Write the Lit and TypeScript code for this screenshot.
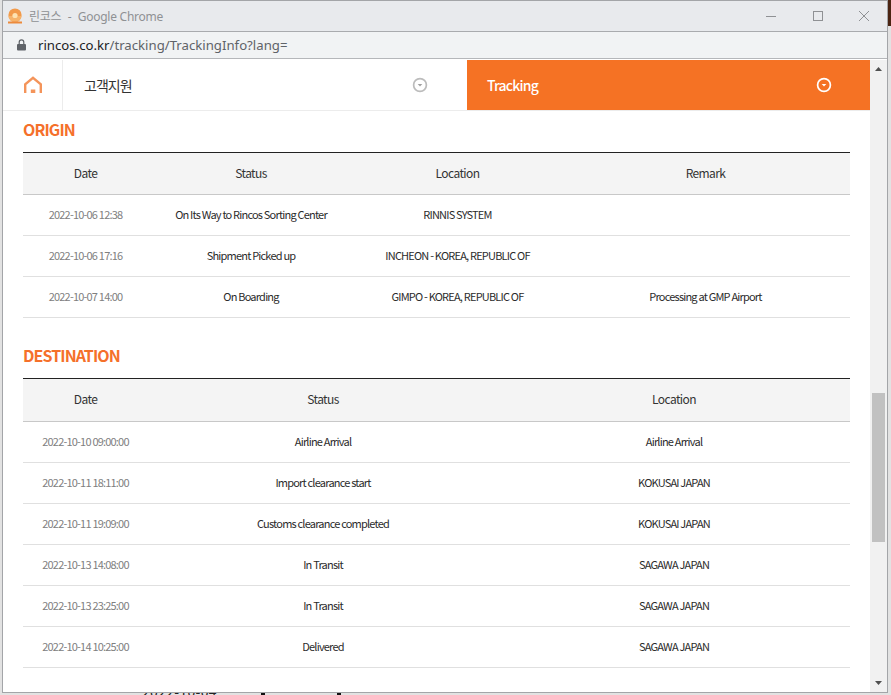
import { LitElement, html, css } from "lit";
import { customElement } from "lit/decorators.js";

const origin = [
  ["2022-10-06 12:38", "On Its Way to Rincos Sorting Center", "RINNIS SYSTEM", ""],
  ["2022-10-06 17:16", "Shipment Picked up", "INCHEON - KOREA, REPUBLIC OF", ""],
  ["2022-10-07 14:00", "On Boarding", "GIMPO - KOREA, REPUBLIC OF", "Processing at GMP Airport"],
];
const dest = [
  ["2022-10-10 09:00:00", "Airline Arrival", "Airline Arrival"],
  ["2022-10-11 18:11:00", "Import clearance start", "KOKUSAI JAPAN"],
  ["2022-10-11 19:09:00", "Customs clearance completed", "KOKUSAI JAPAN"],
  ["2022-10-13 14:08:00", "In Transit", "SAGAWA JAPAN"],
  ["2022-10-13 23:25:00", "In Transit", "SAGAWA JAPAN"],
  ["2022-10-14 10:25:00", "Delivered", "SAGAWA JAPAN"],
];

@customElement("app-root")
export class AppRoot extends LitElement {
  static styles = css`
    :host { display: block; position: relative; width: 891px; height: 695px; background: #e2e2e2; overflow: hidden; padding-left: 2px; box-sizing: border-box;
      font-family: "Noto Sans CJK KR", "Noto Sans", sans-serif; }
    .window { position: relative; z-index: 1; width: 886px; height: 693px; box-sizing: border-box; display: flex; flex-direction: column;
      background: #fff; border: 1px solid #a3a5a8; }
    .title { height: 30px; flex: none; background: #e8eaed; display: flex; align-items: center; padding-left: 4px; gap: 6px; color: #8f9194; font-size: 12px; }
    .title-text { flex: 1; letter-spacing: -0.25px; font-family: "Noto Sans", "Noto Sans CJK KR", sans-serif; }
    .ko { word-spacing: 3.5px; }
    .controls { display: flex; }
    .controls svg { display: block; width: 46px; height: 30px; }
    .url { height: 28px; flex: none; box-sizing: border-box; background: #f1f3f4; border-top: 1px solid #a9abae; border-bottom: 1px solid #b5b7ba; display: flex; align-items: center; padding-left: 14px; gap: 12px; font-size: 13.2px; color: #5f6368; font-family: "Noto Sans", sans-serif; }
    .url b { font-weight: 400; color: #202124; }
    .page { flex: 1; min-height: 0; display: flex; margin-top: 1px; }
    .content { flex: 1; min-width: 0; overflow: hidden; }
    .nav { display: flex; border-bottom: 1px solid #ececec; height: 50px; }
    .home { width: 59px; border-right: 1px solid #ececec; display: flex; align-items: center; justify-content: center; }
    .menu { width: 404px; display: flex; align-items: center; justify-content: space-between; padding: 0 39px 0 21px; box-sizing: border-box; font-size: 14px; color: #333; letter-spacing: -1px; }
    .track { flex: 1; background: #f57224; color: #fff; display: flex; align-items: center; justify-content: space-between; padding: 0 38px 0 20px; font-size: 14px; font-weight: 500; letter-spacing: -0.8px; }
    .body { padding: 0 20px; }
    h2 { margin: 0; font-size: 16px; line-height: 24px; font-weight: 700; color: #f5702a; letter-spacing: -0.9px; }
    .h1 { padding-top: 6px; padding-bottom: 11px; }
    .h2 { padding-top: 25px; padding-bottom: 11px; }
    .tbl { border-top: 1px solid #222; }
    .row { display: grid; height: 38px; padding-bottom: 2px; align-items: center; text-align: center; border-bottom: 1px solid #e0e0e0; font-size: 11px; letter-spacing: -0.8px; color: #2b2b2b; line-height: 16px; }
    .o { grid-template-columns: 125px 206px 207px 289px; }
    .d { grid-template-columns: 125px 350px 352px; }
    .head { background: #f4f4f4; font-size: 12px; letter-spacing: -0.6px; height: 39px; border-bottom-color: #c8c8c8; color: #333; }
    .head.dh { height: 40px; }
    .date { color: #808080; }
    .bar { width: 17px; flex: none; background: #f1f1f1; display: flex; flex-direction: column; justify-content: space-between; align-items: center; position: relative; }
    .bar svg { display: block; margin: 7px 0; }
    .thumb { position: absolute; left: 2px; top: 333px; width: 13px; height: 149px; background: #c1c1c1; }
    .under { position: absolute; }
    .under-date { left: 142px; top: 684px; font-size: 14px; color: #222; letter-spacing: 0.3px; line-height: 14px; white-space: nowrap; }
    .tick { top: 692px; width: 4px; height: 3px; background: #111; }
    .tick-a { left: 261px; }
    .tick-b { left: 337px; }
    .corner { left: 888px; top: 0; width: 3px; height: 26px; background: #4a2412; }
  `;

  private table(cls: string, heads: string[], rows: string[][], headCls = "") {
    return html`<div class="tbl">
      <div class="row head ${cls} ${headCls}">${heads.map((h) => html`<div>${h}</div>`)}</div>
      ${rows.map((r) => html`<div class="row ${cls}">${r.map((c, i) => html`<div class=${i === 0 ? "date" : ""}>${c}</div>`)}</div>`)}
    </div>`;
  }

  private chevron(color: string, tri: string) {
    return html`<svg width="16" height="16" viewBox="0 0 16 16" fill="none">
      <circle cx="8" cy="8" r="6.4" stroke=${color} stroke-width="1.7"></circle>
      <path d="M5.7 6.9h4.600L8 9.400z" fill=${tri}></path>
    </svg>`;
  }

  render() {
    return html`
      <div class="under under-date">2022-10-04</div>
      <div class="under tick tick-a"></div>
      <div class="under tick tick-b"></div>
      <div class="under corner"></div>
      <div class="window">
      <div class="title">
        <svg width="16" height="16" viewBox="0 0 16 16">
          <circle cx="8" cy="7" r="6.6" fill="#f29a4a"></circle>
          <path d="M1.500 8a6.500 6.500 0 0 0 13 0z" fill="#f6b36a"></path>
          <circle cx="8" cy="7.500" r="2.600" fill="#fde2b0"></circle>
          <rect x="1" y="13.500" width="14" height="2" fill="#ec8a3c"></rect>
        </svg>
        <span class="title-text"><span class="ko">린코스 - </span>Google Chrome</span>
        <div class="controls">
          <svg viewBox="0 0 46 30"><path d="M17 15.500h10" stroke="#8f9194" fill="none"></path></svg>
          <svg viewBox="0 0 46 30"><rect x="18.500" y="10.500" width="9" height="9" stroke="#8f9194" fill="none"></rect></svg>
          <svg viewBox="0 0 46 30"><path d="M18 10l10 10M28 10l-10 10" stroke="#8f9194" fill="none"></path></svg>
        </div>
      </div>
      <div class="url">
        <svg width="9" height="12" viewBox="0 0 9 12"><path d="M2.200 5V3.200a2.300 2.300 0 0 1 4.600 0V5" fill="none" stroke="#5f6368" stroke-width="1.200"></path><rect x="0" y="5" width="9" height="6.500" rx="1" fill="#5f6368"></rect></svg>
        <span><b>rincos.co.kr</b>/tracking/TrackingInfo?lang=</span>
      </div>
      <div class="page">
        <div class="content">
          <div class="nav">
            <div class="home">
              <svg width="18" height="18" viewBox="0 0 18 18" fill="none">
                <path d="M1.200 17V8.200L9 1.800l7.800 6.400V17" stroke="#f4945a" stroke-width="2.400"></path>
                <rect x="6.800" y="13.500" width="4.500" height="3.500" fill="#f4945a"></rect>
              </svg>
            </div>
            <div class="menu"><span>고객지원</span>${this.chevron("#bcbcbc", "#a0a0a0")}</div>
            <div class="track"><span>Tracking</span>${this.chevron("#fff", "#fff")}</div>
          </div>
          <div class="body">
            <h2 class="h1">ORIGIN</h2>
            ${this.table("o", ["Date", "Status", "Location", "Remark"], origin)}
            <h2 class="h2">DESTINATION</h2>
            ${this.table("d", ["Date", "Status", "Location"], dest, "dh")}
          </div>
        </div>
        <div class="bar">
          <svg width="7" height="4" viewBox="0 0 7 4"><path d="M0 4h7L3.500 0z" fill="#505050"></path></svg>
          <div class="thumb"></div>
          <svg width="7" height="4" viewBox="0 0 7 4"><path d="M0 0h7L3.500 4z" fill="#505050"></path></svg>
        </div>
      </div>
    </div>`;
  }
}
